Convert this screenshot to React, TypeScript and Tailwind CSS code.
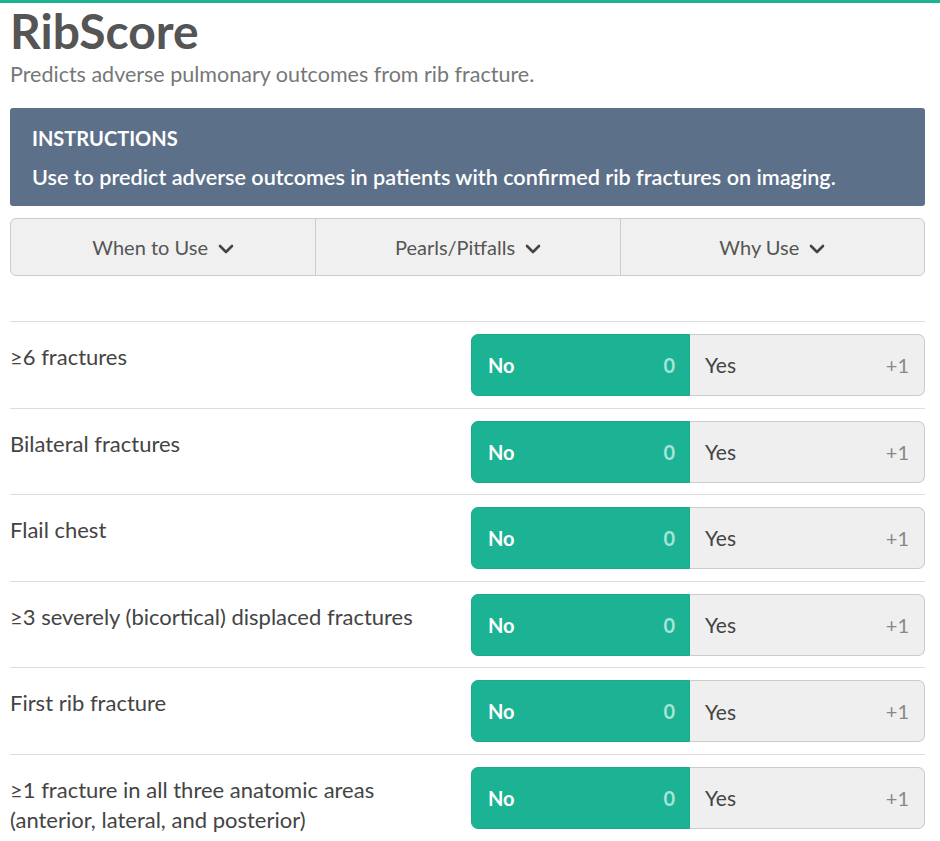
import React from 'react';

const font = { fontFamily: '"Source Sans Pro", Lato, "Open Sans", sans-serif' };

const questions = [
  ['≥6 fractures'],
  ['Bilateral fractures'],
  ['Flail chest'],
  ['≥3 severely (bicortical) displaced fractures'],
  ['First rib fracture'],
  ['≥1 fracture in all three anatomic areas', '(anterior, lateral, and posterior)'],
];

const Chevron = () => (
  <svg width="16" height="10" viewBox="0 0 16 10" className="ml-[10px] mt-[3px]">
    <path d="M2 2 L8 8 L14 2" fill="none" stroke="#444" strokeWidth="2.6" strokeLinecap="round" strokeLinejoin="round" />
  </svg>
);

const Toggle = () => (
  <div className="flex w-[454px] h-[62px] shrink-0">
    <div className="flex items-center justify-between w-[219px] bg-[#1bb394] rounded-l-[7px] border border-[#1aa98c] pl-[16px] pr-[14px]">
      <span className="text-white font-bold text-[20px]">No</span>
      <span className="text-[#a6e4d6] font-bold text-[20px]">0</span>
    </div>
    <div className="flex items-center justify-between flex-1 bg-[#efefef] rounded-r-[7px] border border-l-0 border-[#cccccc] pl-[15px] pr-[15px]">
      <span className="text-[#444] text-[21px]">Yes</span>
      <span className="text-[#888] text-[20px]">+1</span>
    </div>
  </div>
);

export default function App() {
  return (
    <div className="min-h-screen bg-white border-t-[3px] border-[#1bb394]" style={font}>
      <div className="ml-[10px] w-[915px]">
        <h1 className="text-[48px] font-bold text-[#555] leading-[56px] mt-[0px]">RibScore</h1>
        <p className="text-[21.5px] text-[#777] leading-[28px] mt-[1px]">Predicts adverse pulmonary outcomes from rib fracture.</p>

        <div className="mt-[20px] bg-[#5c7089] rounded-[3px] px-[22px] pt-[17px] pb-[15px] text-white">
          <div className="text-[20px] font-bold leading-[26px]">INSTRUCTIONS</div>
          <div className="text-[21.6px] font-semibold leading-[28px] mt-[12px]">
            Use to predict adverse outcomes in patients with confirmed rib fractures on imaging.
          </div>
        </div>

        <div className="mt-[12px] grid grid-cols-3 h-[58px] bg-[#f0f0f0] border border-[#cccccc] rounded-[6px] text-[#555] text-[20px]">
          {['When to Use', 'Pearls/Pitfalls', 'Why Use'].map((t, i) => (
            <div key={t} className={`flex items-center justify-center ${i > 0 ? 'border-l border-[#cccccc]' : ''}`}>
              <span>{t}</span>
              <Chevron />
            </div>
          ))}
        </div>

        <div className="mt-[45px]">
          {questions.map((q, i) => (
            <div key={i} className="flex justify-between border-t border-[#dddddd] pt-[12px] pb-[11.6px]">
              <div className="pt-[8px] text-[22px] leading-[30px] text-[#444]">
                {q.map((l) => (
                  <div key={l}>{l}</div>
                ))}
              </div>
              <Toggle />
            </div>
          ))}
        </div>
      </div>
    </div>
  );
}
